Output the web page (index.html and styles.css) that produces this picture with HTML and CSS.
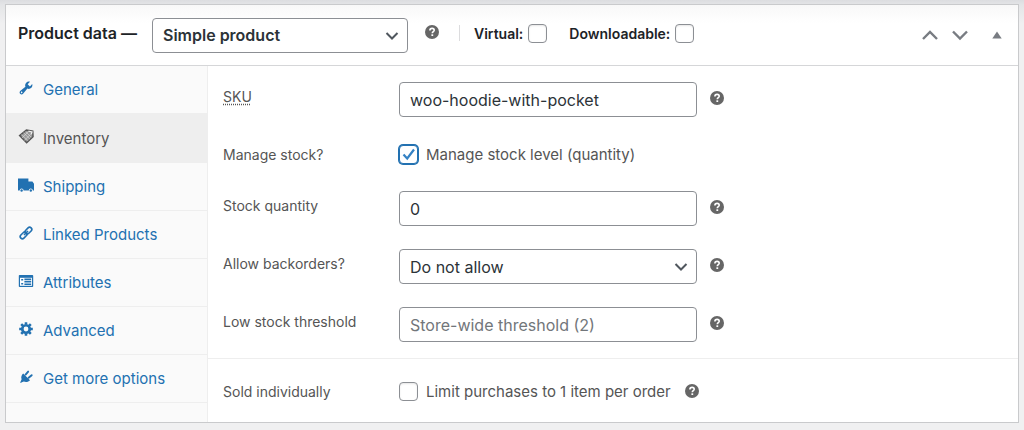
FILE: index.html
```
<!DOCTYPE html>
<html lang="en">
<head>
<meta charset="utf-8">
<meta name="viewport" content="width=device-width, initial-scale=1">
<title>Product data</title>
<link rel="stylesheet" href="styles.css">
</head>
<body>
<svg class="sprite" aria-hidden="true">
  <symbol id="help" viewBox="0 0 14 14">
    <circle cx="7" cy="7" r="7" fill="currentColor"/>
    <path d="M4.9 5.4C4.9 4.1 5.8 3.4 7.1 3.4s2.1.7 2.1 1.8c0 1.5-1.9 1.5-1.9 3.1" fill="none" stroke="#fff" stroke-width="1.6"/>
    <rect x="6.4" y="9.3" width="1.8" height="1.7" fill="#fff"/>
  </symbol>
  <symbol id="chevron-down" viewBox="0 0 14 10">
    <path d="M1.5 2 7 7.5 12.5 2" fill="none" stroke="currentColor" stroke-width="2"/>
  </symbol>
</svg>
<section class="panel">
  <header class="panel-header">
    <label class="title" for="type">Product data —</label>
    <span class="select-box type-select">
      <select id="type" class="field"><option>Simple product</option></select>
      <svg class="arrow"><use href="#chevron-down"/></svg>
    </span>
    <svg class="help type-help"><use href="#help"/></svg>
    <div class="flags">
      <label class="flag">Virtual: <input type="checkbox" class="check"></label>
      <label class="flag">Downloadable: <input type="checkbox" class="check"></label>
    </div>
    <div class="actions">
      <button type="button" class="action" aria-label="Move up"><svg width="18" height="12" viewBox="0 0 18 12"><path d="M2 10 9 3l7 7" fill="none" stroke="currentColor" stroke-width="2.4"/></svg></button>
      <button type="button" class="action" aria-label="Move down"><svg width="18" height="12" viewBox="0 0 18 12"><path d="M2 2.500 9 9.500l7-7" fill="none" stroke="currentColor" stroke-width="2.400"/></svg></button>
      <button type="button" class="action toggle" aria-label="Toggle panel"><svg width="10" height="8" viewBox="0 0 10 8"><path d="M5 .5 9.700 7.500H.3z" fill="currentColor"/></svg></button>
    </div>
  </header>
  <div class="panel-body">
    <nav class="tabs">
      <a class="tab" href="#general"><svg class="icon" viewBox="0 0 20 20"><path d="M16.680 9.770c-1.340 1.340-3.300 1.670-4.950.99l-5.410 6.520c-.99.99-2.590.99-3.580 0s-.99-2.590 0-3.570l6.520-5.420c-.68-1.650-.35-3.610.99-4.950 1.280-1.280 3.120-1.620 4.720-1.060l-2.890 2.890 2.820 2.820 2.860-2.870c.53 1.580.18 3.390-1.080 4.650zM3.810 16.210c.4.390 1.040.39 1.430 0 .4-.4.400-1.040 0-1.430-.39-.4-1.030-.4-1.430 0-.39.39-.39 1.030 0 1.430z" fill="currentColor"/></svg>General</a>
      <a class="tab active" href="#inventory" aria-current="page"><svg class="icon" viewBox="0 0 20 20"><path d="M2 9.500 10.500 2.500l8 1.500.3 7-8 7.500z" fill="#999" stroke="currentColor" stroke-width="1.800"/><path d="m4.500 8 8 8M7 6l8 8M9.500 4.500l7 7M5 12.500l8-8M8 15.500l8-8" stroke="#ddd" stroke-width=".8"/><path d="m13 4 4.500 1-1 3" fill="none" stroke="#eee" stroke-width="1.600"/></svg>Inventory</a>
      <a class="tab" href="#shipping"><svg class="icon" viewBox="0 0 20 20"><path d="M0 2h13v3.500h5l2 3V17h-1.500a2.500 2.500 0 0 0-5 0H7a2.500 2.500 0 0 0-5 0H0z" fill="currentColor"/><circle cx="4.500" cy="16.800" r="1.500" fill="currentColor"/><circle cx="16" cy="16.800" r="1.500" fill="currentColor"/></svg>Shipping</a>
      <a class="tab" href="#linked"><svg class="icon" viewBox="0 0 20 20"><g fill="none" stroke="currentColor" stroke-width="2"><rect x="8.300" y="4.300" width="9.500" height="5.400" rx="2.700" transform="rotate(-45 13.050 7)"/><rect x="2.200" y="10.300" width="9.500" height="5.400" rx="2.700" transform="rotate(-45 6.950 13)"/><path d="m7.500 12.500 5-5"/></g></svg>Linked Products</a>
      <a class="tab" href="#attributes"><svg class="icon" viewBox="0 0 20 20"><path d="M2 2.500h16a1 1 0 0 1 1 1v13a1 1 0 0 1-1 1H2a1 1 0 0 1-1-1v-13a1 1 0 0 1 1-1z" fill="currentColor"/><path d="M2.500 6h15v10h-15z" fill="#fff"/><path d="M4 7.500h2.500v2H4zM4 12.500h2.500v2H4zM8 7h8.500v2H8zM8 10h8.500v2H8zM8 13h8.500v2H8z" fill="currentColor"/></svg>Attributes</a>
      <a class="tab" href="#advanced"><svg class="icon" viewBox="0 0 20 20"><g stroke="currentColor"><circle cx="10" cy="10" r="4.700" fill="none" stroke-width="3.400"/><path d="M10 1.500v3M10 15.500v3M1.500 10h3M15.500 10h3M4 4l2.500 2.500M13.500 13.500 16 16M4 16l2.500-2.500M13.500 6.500 16 4" stroke-width="3.200"/></g></svg>Advanced</a>
      <a class="tab" href="#more"><svg class="icon" viewBox="0 0 20 20"><path d="m6.500 5.500 8.500 8.500c-1.700 2-5 3-7.700 1.700L2.500 17.500l2-4.800c-1.200-2.700.3-5.700 2-7.200z" fill="currentColor"/><path d="m9.500 7 3.200-3.700M13.300 11l3.800-3.200" stroke="currentColor" stroke-width="2.400" stroke-linecap="round"/></svg>Get more options</a>
    </nav>
    <form class="form">
      <div class="group">
        <div class="row"><label class="label" for="sku"><abbr title="Stock Keeping Unit">SKU</abbr></label><input id="sku" class="field" type="text" value="woo-hoodie-with-pocket"><svg class="help"><use href="#help"/></svg></div>
        <div class="row row-check"><label class="label" for="manage">Manage stock?</label><div class="option"><input id="manage" class="check" type="checkbox" checked><label for="manage">Manage stock level (quantity)</label></div></div>
        <div class="row"><label class="label" for="qty">Stock quantity</label><input id="qty" class="field" type="text" value="0"><svg class="help"><use href="#help"/></svg></div>
        <div class="row"><label class="label" for="back">Allow backorders?</label><span class="select-box"><select id="back" class="field"><option>Do not allow</option></select><svg class="arrow"><use href="#chevron-down"/></svg></span><svg class="help"><use href="#help"/></svg></div>
        <div class="row"><label class="label" for="low">Low stock threshold</label><input id="low" class="field" type="text" placeholder="Store-wide threshold (2)"><svg class="help"><use href="#help"/></svg></div>
      </div>
      <div class="group">
        <div class="row row-check"><label class="label" for="sold">Sold individually</label><div class="option"><input id="sold" class="check" type="checkbox"><label for="sold">Limit purchases to 1 item per order</label><svg class="help"><use href="#help"/></svg></div></div>
      </div>
    </form>
  </div>
</section>
</body>
</html>
```
FILE: styles.css
```
* { box-sizing: border-box; }
body {
  margin: 0;
  padding: 4px 5px 7px;
  background: linear-gradient(#dcdde0, #e4e5e7 5px, #f0f0f1 24px);
  background-color: #f0f0f1;
  background-repeat: no-repeat;
  font-family: Inter, "Liberation Sans", sans-serif;
  font-size: 15px;
  color: #555;
}
.sprite { position: absolute; width: 0; height: 0; }
.panel { border: 1px solid #c9cacc; background: #fff; }
.panel-header {
  display: flex;
  align-items: center;
  height: 61px;
  padding: 0 12px;
  border-bottom: 1px solid #d5d6d8;
  background: linear-gradient(#f8f8f8, #fff 18px);
  color: #1d2327;
  font-weight: 600;
}
.title { font-size: 16px; padding-bottom: 4px; white-space: nowrap; }
.field {
  width: 100%;
  height: 35px;
  padding: 0 10px;
  border: 1px solid #8c8f94;
  border-radius: 4px;
  background: #fff;
  color: #2c3338;
  font: inherit;
  font-size: 16px;
  appearance: none;
}
.field::placeholder { color: #72767a; opacity: 1; }
.select-box { position: relative; display: block; }
.arrow {
  position: absolute;
  right: 9px;
  top: 13px;
  width: 14px;
  height: 10px;
  color: #50575e;
  pointer-events: none;
}
.type-select { width: 256px; margin-left: 15px; }
.help { display: block; flex: none; width: 14px; height: 14px; color: #666; }
.type-help { margin: 0 20px 6px 17px; }
.flags {
  display: flex;
  gap: 22px;
  height: 16px;
  padding-left: 14px;
  margin-bottom: 4px;
  border-left: 1px solid #dcdcde;
  align-items: center;
  font-size: 14px;
}
.flag { display: flex; align-items: center; gap: 5px; white-space: nowrap; }
.check {
  appearance: none;
  flex: none;
  width: 19px;
  height: 19px;
  margin: 0;
  border: 1px solid #8c8f94;
  border-radius: 4px;
  background: #fff;
  box-shadow: inset 0 1px 2px rgba(0, 0, 0, .1);
}
.check:checked {
  border-color: #2271b1;
  box-shadow: 0 0 0 1px #2271b1;
  background: #fff url("data:image/svg+xml,%3Csvg xmlns='http://www.w3.org/2000/svg' viewBox='0 0 17 17'%3E%3Cpath d='M3.500 8.500l3.700 4L14 3.500' fill='none' stroke='%233582c4' stroke-width='2.200'/%3E%3C/svg%3E") center / 17px no-repeat;
}
.actions { display: flex; align-items: center; gap: 12px; margin-left: auto; }
.action { display: flex; padding: 0; border: 0; background: none; color: #787c82; }
.toggle { margin: 0 4px 0 11px; }
.panel-body { display: flex; min-height: 356px; }
.tabs {
  flex: none;
  width: 202px;
  background: #fafafa;
  border-right: 1px solid #eee;
}
.tab {
  display: flex;
  align-items: center;
  gap: 9px;
  height: 48px;
  padding-left: 12px;
  border-bottom: 1px solid #eee;
  color: #2271b1;
  font-size: 15px;
  text-decoration: none;
}
.active { height: 49px; background: #eee; color: #555; }
.icon { flex: none; width: 16px; height: 16px; margin-bottom: 4px; }
.form { flex: 1; min-width: 0; }
.group {
  display: flex;
  flex-direction: column;
  gap: 23px;
  padding: 16px 15px;
}
.group + .group { padding-top: 18px; border-top: 1px solid #eee; }
.row {
  display: grid;
  grid-template-columns: 163px 298px auto;
  column-gap: 13px;
  align-items: center;
}
.row .label { padding-bottom: 6px; font-size: 14px; }
.row .help { margin-bottom: 3px; }
.row-check { grid-template-columns: 163px 1fr; min-height: 28px; }
.row-check .label { padding-bottom: 0; }
.option { display: flex; align-items: center; gap: 8px; }
.option .help { margin: 0 0 0 6px; }
abbr { text-decoration: underline dotted; text-underline-offset: 2px; }
```
